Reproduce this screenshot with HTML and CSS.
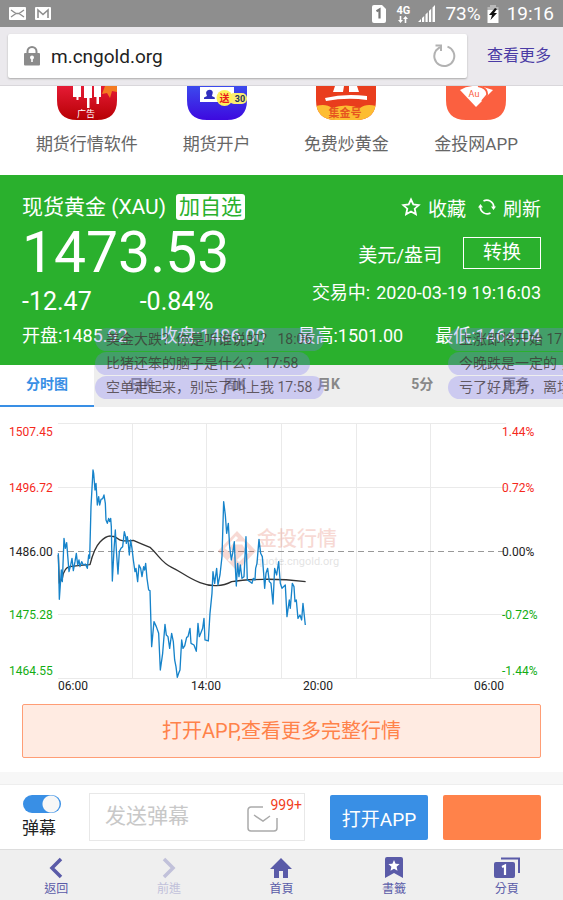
FILE: index.html
```html
<!DOCTYPE html>
<html lang="zh-CN">
<head>
<meta charset="utf-8">
<meta name="viewport" content="width=device-width, initial-scale=1">
<title>现货黄金 (XAU)</title>
<link rel="stylesheet" href="styles.css">
</head>
<body>
<div class="status">
  <svg class="status-mail" width="42" height="14" viewBox="0 0 42 14" aria-hidden="true">
    <rect width="17" height="13" rx="1" fill="#fff"/>
    <path d="M2 3l5 3.500h3l5-3.500M2 10l5-3.500m3 0l5 3.500" fill="none" stroke="#8e8e8e" stroke-width="1.300"/>
    <rect x="26" width="16" height="13" rx="1" fill="#fff"/>
    <path d="M29 11V3l5 4.500L39 3v8" fill="none" stroke="#8e8e8e" stroke-width="1.600"/>
  </svg>
  <div class="status-right">
    <svg width="14" height="18" viewBox="0 0 14 18" aria-hidden="true"><path d="M2 0h8l4 4v12a2 2 0 0 1-2 2H2a2 2 0 0 1-2-2V2a2 2 0 0 1 2-2z" fill="#fff"/><path d="M4.500 6.200L7.500 4.500V13.500" fill="none" stroke="#777" stroke-width="2.200"/></svg>
    <span class="net"><span>4G</span>
      <svg width="10" height="7" viewBox="0 0 10 7" aria-hidden="true"><path d="M1.700 0h1.600v4H5L2.500 7 0 4h1.700zM6.700 7h1.600V3H10L7.500 0 5 3h1.700z" fill="#fff"/></svg>
    </span>
    <svg width="17" height="17" viewBox="0 0 17 17" aria-hidden="true"><path d="M0 17l3-3v3zM4 13l2.200-2v6H4zM7.500 9.500l2.200-2.200V17H7.500zM11 6l2.200-2.200V17H11zM14.500 2.500L17 0v17h-2.500z" fill="#fff"/></svg>
    <span class="battery">73%</span>
    <svg width="12" height="18" viewBox="0 0 12 18" aria-hidden="true"><path d="M3 0h6v2h2.500v3H.5V2H3z" fill="#b8b8b8"/><path d="M.5 5h11v13H.5z" fill="#fff"/><path d="M8 3L2 10h3L3.500 15 10 8H7l3-4z" fill="#111"/></svg>
    <span class="clock">19:16</span>
  </div>
</div>

<header class="browser">
  <div class="address">
    <svg width="16" height="20" viewBox="0 0 16 20" aria-hidden="true"><path d="M3.500 9V5.500a4.500 4.500 0 0 1 9 0V9" fill="none" stroke="#8b8b8b" stroke-width="2"/><rect y="7" width="16" height="12.500" rx="1" fill="#8b8b8b"/><circle cx="8" cy="11.500" r="2" fill="#fff"/><path d="M7.200 12h1.600v4H7.200z" fill="#fff"/></svg>
    <input type="text" aria-label="网址" value="m.cngold.org">
    <button class="plain" type="button" aria-label="重新整理"><svg width="24" height="24" viewBox="0 0 24 24"><path d="M15.500 2.600A10 10 0 1 1 4 6.500L8 3" fill="none" stroke="#b2b2b2" stroke-width="2"/><path d="M3.500 1.500H9V7" fill="none" stroke="#b2b2b2" stroke-width="2"/></svg></button>
  </div>
  <a class="more" href="#">查看更多</a>
</header>

<main>
<nav class="apps" aria-label="应用">
  <a href="#">
    <svg width="60" height="34" viewBox="0 0 60 34" aria-hidden="true"><defs><linearGradient id="red" x2="0" y2="1"><stop stop-color="#e51b35"/><stop offset="1" stop-color="#b70004"/></linearGradient></defs><path d="M0 0h60v14q0 20-20 20H20Q0 34 0 14z" fill="url(#red)"/><path d="M16 0h8v11h-2.500v3h-2v-3H16zM27 0h8v12h-2.500v10h-2.500V12H27zM37 0h7v11h-2v7h-2.500v-7H37z" fill="#fff"/><path d="M48 0h12v6l-5-1-2 7-3-5-5 1z" fill="#f47a20"/><text x="29" y="30.500" font-size="9" text-anchor="middle" fill="#fff">广告</text></svg>
    <span>期货行情软件</span>
  </a>
  <a href="#">
    <svg width="60" height="34" viewBox="0 0 60 34" aria-hidden="true"><defs><linearGradient id="blue" x2="0" y2="1"><stop stop-color="#3c4aed"/><stop offset="1" stop-color="#3d09df"/></linearGradient></defs><path d="M0 0h60v14q0 20-20 20H20Q0 34 0 14z" fill="url(#blue)"/><path d="M13 1h34v15H13z" fill="#fff"/><path d="M21.500 4a3 3 0 0 1 4 4l-.7 2 3 1.500v1.500H17v-1.500l3-1.500-.7-2a3 3 0 0 1 2.200-4z" fill="#302ebe"/><rect x="42" y="7" width="18" height="11" rx="5" fill="#f9ed72"/><circle cx="37.500" cy="12" r="8" fill="#fff15b"/><text x="37.500" y="16" font-size="10" font-weight="700" text-anchor="middle" fill="#e91c1c">送</text><text x="53" y="16" font-size="9" font-weight="700" text-anchor="middle" fill="#26335c">30</text></svg>
    <span>期货开户</span>
  </a>
  <a href="#">
    <svg width="60" height="34" viewBox="0 0 60 34" aria-hidden="true"><defs><clipPath id="tile"><path d="M0 0h60v14q0 20-20 20H20Q0 34 0 14z"/></clipPath></defs><g clip-path="url(#tile)"><path d="M0 0h60v34H0z" fill="#e93d1d"/><path d="M0 20q10-3 16 2 14-5 28 0 6-5 16-2v14H0z" fill="#fdbd32"/></g><path d="M19 0h9l-1 6H17zM33 0h8l2 6H33zM9 12q20-5 42-2v4q-20-3-41 1z" fill="#fff"/><text x="29" y="31" font-size="11" font-weight="700" text-anchor="middle" fill="#e65420">集金号</text></svg>
    <span>免费炒黄金</span>
  </a>
  <a href="#">
    <svg width="60" height="34" viewBox="0 0 60 34" aria-hidden="true"><path d="M0 0h60v14q0 20-20 20H20Q0 34 0 14z" fill="#fb6040"/><path d="M14 4Q22-1 34 0l13 4-17 17z" fill="#fff"/><path d="M32 0q10 2 9 9l-5 6" fill="none" stroke="#fb6040" stroke-width="1.800"/><text x="28" y="11" font-size="9" text-anchor="middle" fill="#fb6040">Au</text></svg>
    <span>金投网APP</span>
  </a>
</nav>

<section class="market">
  <div class="quote">
    <div class="quote-main">
      <div class="quote-left">
        <div class="name"><h1>现货黄金 (XAU)</h1><button class="add" type="button">加自选</button></div>
        <div class="price">1473.53</div>
        <div class="change"><span>-12.47</span><span>-0.84%</span></div>
      </div>
      <div class="quote-right">
        <div class="actions">
          <button class="plain" type="button"><svg width="20" height="20" viewBox="0 0 20 20" aria-hidden="true"><path d="M10 2.500l2.300 5 5.400.6-4 3.600 1.200 5.600-4.900-2.800-4.900 2.800 1.200-5.600-4-3.600 5.400-.6z" fill="none" stroke="#fff" stroke-width="1.800"/></svg>收藏</button>
          <button class="plain" type="button"><svg width="18" height="18" viewBox="0 0 18 18" aria-hidden="true"><path d="M5.500 3A7 7 0 0 1 15.800 9M12.500 15A7 7 0 0 1 2.200 9" fill="none" stroke="#fff" stroke-width="1.700"/><path d="M13 8.500h5L15.500 12zM0 9.500L2.500 6 5 9.500z" fill="#fff"/></svg>刷新</button>
        </div>
        <div class="unit"><span>美元/盎司</span><button type="button">转换</button></div>
        <div class="time"><span>交易中:</span><time>2020-03-19 19:16:03</time></div>
      </div>
    </div>
    <div class="stats"><span>开盘:1485.92</span><span>收盘:1486.00</span><span>最高:1501.00</span><span>最低:1464.04</span></div>
  </div>
  <nav class="tabs" aria-label="图表周期">
    <a class="active" href="#">分时图</a><a href="#">日K</a><a href="#">周K</a><a href="#">月K</a><a href="#">5分</a><a href="#">更多</a>
  </nav>
  <div class="barrage">
    <div><span>美金大跌？你是听谁说的？ 18:06</span><span>比猪还笨的脑子是什么？ 17:58</span><span>空单走起来，别忘了叫上我 17:58</span></div>
    <div><span>上涨即将开始 17:58</span><span>今晚跌是一定的 ，17:58</span><span>亏了好几万，离场 17:58</span></div>
  </div>
</section>

<section class="chart">
<svg viewBox="0 0 563 290" role="img" aria-label="现货黄金分时图">
  <g fill="none" stroke="#eaeaea" stroke-width="1">
    <path d="M58 16.500H506M58 80.500H506M58 207.500H506M58 271.500H506M132.500 16V271M206.500 16V271M281.500 16V271M356.500 16V271M430.500 16V271"/>
    <path d="M58 144.500H506" stroke="#999" stroke-dasharray="6 4"/>
  </g>
  <g opacity=".2">
    <path d="M237 124l19 20-19 20-19-20z" fill="#d8482c"/>
    <path d="M237 130l-10 11 7 6-5 7M234 136h9l5 8-10 10" fill="none" stroke="#fff" stroke-width="3"/>
    <text x="257" y="139" font-size="20" font-weight="500" fill="#d8482c">金投行情</text>
    <text x="256" y="158" font-size="11" fill="#777">quote.cngold.org</text>
  </g>
  <g transform="translate(50 33) scale(.3333)" fill="none" stroke-linejoin="round">
    <path stroke="#333" stroke-width="4" d="M25 345L28 430 37 415Q42 382 60 380L90 376 120 374Q132 325 150 306T182 288Q195 288 205 297T250 301Q275 312 300 322C330 350 335 368 365 382S410 412 450 428Q475 438 500 437T545 425Q580 419 640 418T767 425"/>
    <path stroke="#1683ca" stroke-width="4" d="M25 340L28 478 34 390 37 425 42 295 46 325 50 308 57 395 62 375 66 355 70 392 75 365 79 340 83 375 87 360 90 380 95 365 100 375 106 372 112 385 116 345 119 355 123 200 129 90 131 100 135 150 138 130 142 195 146 170 149 195 153 178 158 176 162 165 166 190 168 240 172 250 176 235 179 245 182 235 184 260 187 423 192 330 196 270 199 330 204 402 208 335 213 325 218 320 223 275 227 290 229 310 232 290 235 310 238 345 242 300 246 325 250 360 255 395 258 385 263 425 267 375 272 385 276 410 281 380 284 390 287 370 291 415 296 450 300 452 305 620 312 545 319 560 326 580 331 690 338 640 345 553 349 585 354 590 359 625 365 580 370 605 374 660 378 680 382 712 386 700 390 690 395 600 399 625 404 618 410 592 414 590 420 565 423 610 432 615 439 634 444 550 448 590 454 575 458 565 462 535 465 600 475 603 480 520 486 460 489 395 494 430 500 385 504 435 510 405 516 350 521 185 526 225 530 280 535 250 539 320 544 360 548 340 553 305 556 380 559 438 563 370 567 410 571 375 576 415 582 410 588 290 592 420 600 425 606 430 610 415 615 420 617 385 621 370 627 298 632 340 637 350 641 400 644 445 648 400 653 385 658 425 663 430 669 492 674 385 680 405 686 365 691 430 696 445 706 435 711 530 718 480 721 505 727 430 732 440 735 485 739 480 744 535 750 525 755 540 759 490 766 555"/>
  </g>
  <g class="axis">
    <g fill="#f5291c"><text x="9" y="29">1507.45</text><text x="9" y="85">1496.72</text><text x="502" y="29">1.44%</text><text x="502" y="85">0.72%</text></g>
    <g fill="#222"><text x="9" y="149">1486.00</text><text x="502" y="149">0.00%</text><text x="58" y="283">06:00</text><text x="191" y="283">14:00</text><text x="303" y="283">20:00</text><text x="474" y="283">06:00</text></g>
    <g fill="#13ad13"><text x="9" y="212">1475.28</text><text x="9" y="268">1464.55</text><text x="502" y="212">-0.72%</text><text x="502" y="268">-1.44%</text></g>
  </g>
</svg>
<a class="open-wide" href="#">打开APP,查看更多完整行情</a>
</section>
</main>

<footer>
  <form class="composer">
    <label class="switch"><input type="checkbox" role="switch" checked><span>弹幕</span></label>
    <div class="message">
      <input type="text" placeholder="发送弹幕" aria-label="发送弹幕">
      <button class="plain inbox" type="button" aria-label="消息 999+">
        <svg width="32" height="26" viewBox="0 0 32 26" aria-hidden="true"><path d="M16 1H4a3 3 0 0 0-3 3v18a3 3 0 0 0 3 3h23a3 3 0 0 0 3-3V12M7 9l9 6 7-5" fill="none" stroke="#aaa" stroke-width="1.500"/></svg>
        <span class="badge">999+</span>
      </button>
    </div>
    <button class="app-button" type="button">打开APP</button>
    <button class="app-button orange" type="button" aria-label="更多"></button>
  </form>
  <nav class="toolbar" aria-label="浏览器" lang="zh-TW">
    <a href="#"><svg width="26" height="22" viewBox="0 0 26 22" aria-hidden="true"><path d="M18 2l-9 9 9 9" fill="none" stroke="#5a5ba8" stroke-width="3.500"/></svg>返回</a>
    <a class="off" href="#"><svg width="26" height="22" viewBox="0 0 26 22" aria-hidden="true"><path d="M8 2l9 9-9 9" fill="none" stroke="#c1c1da" stroke-width="3.500"/></svg>前進</a>
    <a href="#"><svg width="26" height="22" viewBox="0 0 26 22" aria-hidden="true"><path d="M13 1l11 11h-4v9h-5v-7h-4v7H6v-9H2z" fill="#5a5ba8"/></svg>首頁</a>
    <a href="#"><svg width="26" height="22" viewBox="0 0 26 22" aria-hidden="true"><path d="M4 2q0-2 2-2h14q2 0 2 2v19l-9-5-9 5z" fill="#5a5ba8"/><path d="M13 3l1.600 3.700 4 .4-3 2.700.9 4-3.500-2.100L9.500 13.800l.9-4-3-2.700 4-.4z" fill="#fff"/></svg>書籤</a>
    <a href="#"><svg width="26" height="22" viewBox="0 0 26 22" aria-hidden="true"><path d="M7 1.500h18V16" fill="none" stroke="#5a5ba8" stroke-width="2"/><rect y="5" width="21" height="16" rx="2" fill="#5a5ba8"/><path d="M8 10l3-1.500V18" fill="none" stroke="#fff" stroke-width="2.200"/></svg>分頁</a>
  </nav>
</footer>
</body>
</html>
```
FILE: styles.css
```css
* { box-sizing: border-box; }

body {
  margin: 0;
  min-height: 100vh;
  display: flex;
  flex-direction: column;
  background: #f7f7f7;
  color: #222;
  font-family: Roboto, "Noto Sans CJK SC", sans-serif;
}

a { color: inherit; text-decoration: none; }
button, input { font: inherit; color: inherit; margin: 0; }
svg { display: block; flex: none; }
.plain { padding: 0; border: 0; background: none; }

.status {
  display: flex;
  justify-content: space-between;
  align-items: center;
  height: 27px;
  padding: 0 9px;
  background: #8e8e8e;
  color: #fff;
  font-size: 19px;
}
.status-right { display: flex; align-items: center; gap: 6px; }
.net {
  display: flex;
  flex-direction: column;
  align-items: center;
  width: 18px;
  margin-left: 2px;
  font-size: 11px;
  line-height: 11px;
  font-weight: 700;
}
.battery { margin-left: 4px; }
.clock { margin-left: 2px; }

.browser {
  display: flex;
  align-items: center;
  height: 59px;
  padding: 0 12px 0 8px;
  gap: 20px;
  background: #ebe9ed;
  border-bottom: 1px solid #d9d7db;
}
.address {
  flex: 1;
  display: flex;
  align-items: center;
  gap: 11px;
  height: 44px;
  padding: 0 11px 0 16px;
  background: #fff;
  border-radius: 2px;
  box-shadow: 0 1px 2px #aaa;
}
.address input {
  flex: 1;
  min-width: 0;
  padding: 0;
  border: 0;
  outline: 0;
  font-size: 19px;
}
.more { color: #4a3ba5; font-size: 16px; line-height: 20px; }

.apps {
  display: grid;
  grid-template-columns: repeat(4, 1fr);
  height: 89px;
  padding: 0 22px;
  background: #fff;
  color: #666;
  font-size: 17px;
  line-height: 24px;
}
.apps a {
  display: flex;
  flex-direction: column;
  align-items: center;
  gap: 12px;
  white-space: nowrap;
}

.market { position: relative; overflow: hidden; }
.quote { padding: 16px 22px 0; background: #2ab02d; color: #fff; }
.quote-main { display: flex; justify-content: space-between; }
.name { display: flex; align-items: center; gap: 10px; height: 32px; }
h1 { margin: 0; font-size: 21px; font-weight: 400; line-height: 28px; }
.add {
  height: 26px;
  padding: 0 3px;
  border: 0;
  border-radius: 3px;
  background: #fff;
  color: #2ab02d;
  font-size: 21px;
  line-height: 24px;
}
.price { height: 60px; font-size: 57px; line-height: 60px; }
.change { display: flex; gap: 48px; font-size: 25px; line-height: 38px; }
.quote-right {
  display: flex;
  flex-direction: column;
  align-items: flex-end;
  font-size: 19px;
}
.actions { display: flex; gap: 12px; height: 32px; }
.actions button { display: flex; align-items: center; gap: 7px; }
.unit { display: flex; align-items: center; gap: 21px; height: 60px; }
.unit button {
  width: 78px;
  height: 32px;
  padding: 0;
  border: 1px solid #fff;
  background: none;
  line-height: 26px;
}
.time { display: flex; gap: 6px; font-size: 18px; line-height: 20px; }
.stats {
  display: flex;
  justify-content: space-between;
  height: 44px;
  font-size: 18px;
  line-height: 30px;
}

.tabs {
  display: grid;
  grid-template-columns: repeat(6, 1fr);
  height: 42px;
  background: #eee;
  color: #888;
  font-size: 14px;
  font-weight: 700;
  line-height: 38px;
  text-align: center;
}
.tabs .active {
  background: #fff;
  color: #398fe5;
  border-bottom: 2px solid #398fe5;
}

.barrage {
  position: absolute;
  top: 153px;
  left: 95px;
  display: flex;
  pointer-events: none;
  color: rgba(60, 50, 50, .75);
  font-family: Roboto, "Noto Sans CJK TC", sans-serif;
  font-size: 14px;
  line-height: 23px;
  white-space: nowrap;
}
.barrage div {
  display: flex;
  flex-direction: column;
  align-items: flex-start;
  gap: 1px;
  width: 353px;
}
.barrage span {
  padding: 0 12px 0 11px;
  border-radius: 12px;
  background: rgba(125, 120, 245, .3);
}

.chart { padding-bottom: 14px; background: #fff; }
.chart svg { width: 100%; height: auto; }
.axis { font-size: 12px; }
.open-wide {
  display: block;
  margin: 7px 22px 0;
  border: 1px solid #ff9d75;
  border-radius: 2px;
  background: #ffebe2;
  color: #ff824a;
  font-size: 20px;
  line-height: 52px;
  text-align: center;
}

footer { margin-top: auto; }
.composer {
  display: flex;
  align-items: center;
  height: 65px;
  padding: 0 22px;
  border-top: 1px solid #eee;
  background: #fff;
}
.switch {
  display: flex;
  flex-direction: column;
  gap: 3px;
  width: 67px;
  font-size: 17px;
  line-height: 24px;
}
.switch input {
  appearance: none;
  width: 38px;
  height: 18px;
  margin-left: 1px;
  border-radius: 9px;
  background: radial-gradient(circle at 28px 9px, #f7f7f7 8px, #398fe5 9px);
}
.message {
  flex: 1;
  display: flex;
  min-width: 0;
  height: 48px;
  border: 1px solid #e8e8e8;
}
.message input {
  flex: 1;
  min-width: 0;
  padding: 0 0 3px 15px;
  border: 0;
  outline: 0;
  background: none;
  font-size: 21px;
}
.message input::placeholder { color: #c8c8c8; }
.inbox { position: relative; width: 57px; padding-top: 4px; }
.badge {
  position: absolute;
  top: 2px;
  right: 2px;
  background: #fff;
  color: #f13d21;
  font-size: 14px;
  line-height: 18px;
}
.app-button {
  width: 98px;
  height: 45px;
  margin-left: 25px;
  padding: 0;
  border: 0;
  border-radius: 2px;
  background: #398fe5;
  color: #fff;
  font-size: 19px;
}
.app-button + .app-button { margin-left: 15px; }
.app-button.orange { background: #ff824a; }

.toolbar {
  display: grid;
  grid-template-columns: repeat(5, 1fr);
  height: 51px;
  padding-top: 7px;
  border-top: 1px solid #ddd;
  background: #efefef;
  color: #5a5ba8;
  font-family: Roboto, "Noto Sans CJK TC", sans-serif;
  font-size: 12px;
  line-height: 20px;
}
.toolbar a { display: flex; flex-direction: column; align-items: center; }
.toolbar .off { color: #c1c1da; }
```
